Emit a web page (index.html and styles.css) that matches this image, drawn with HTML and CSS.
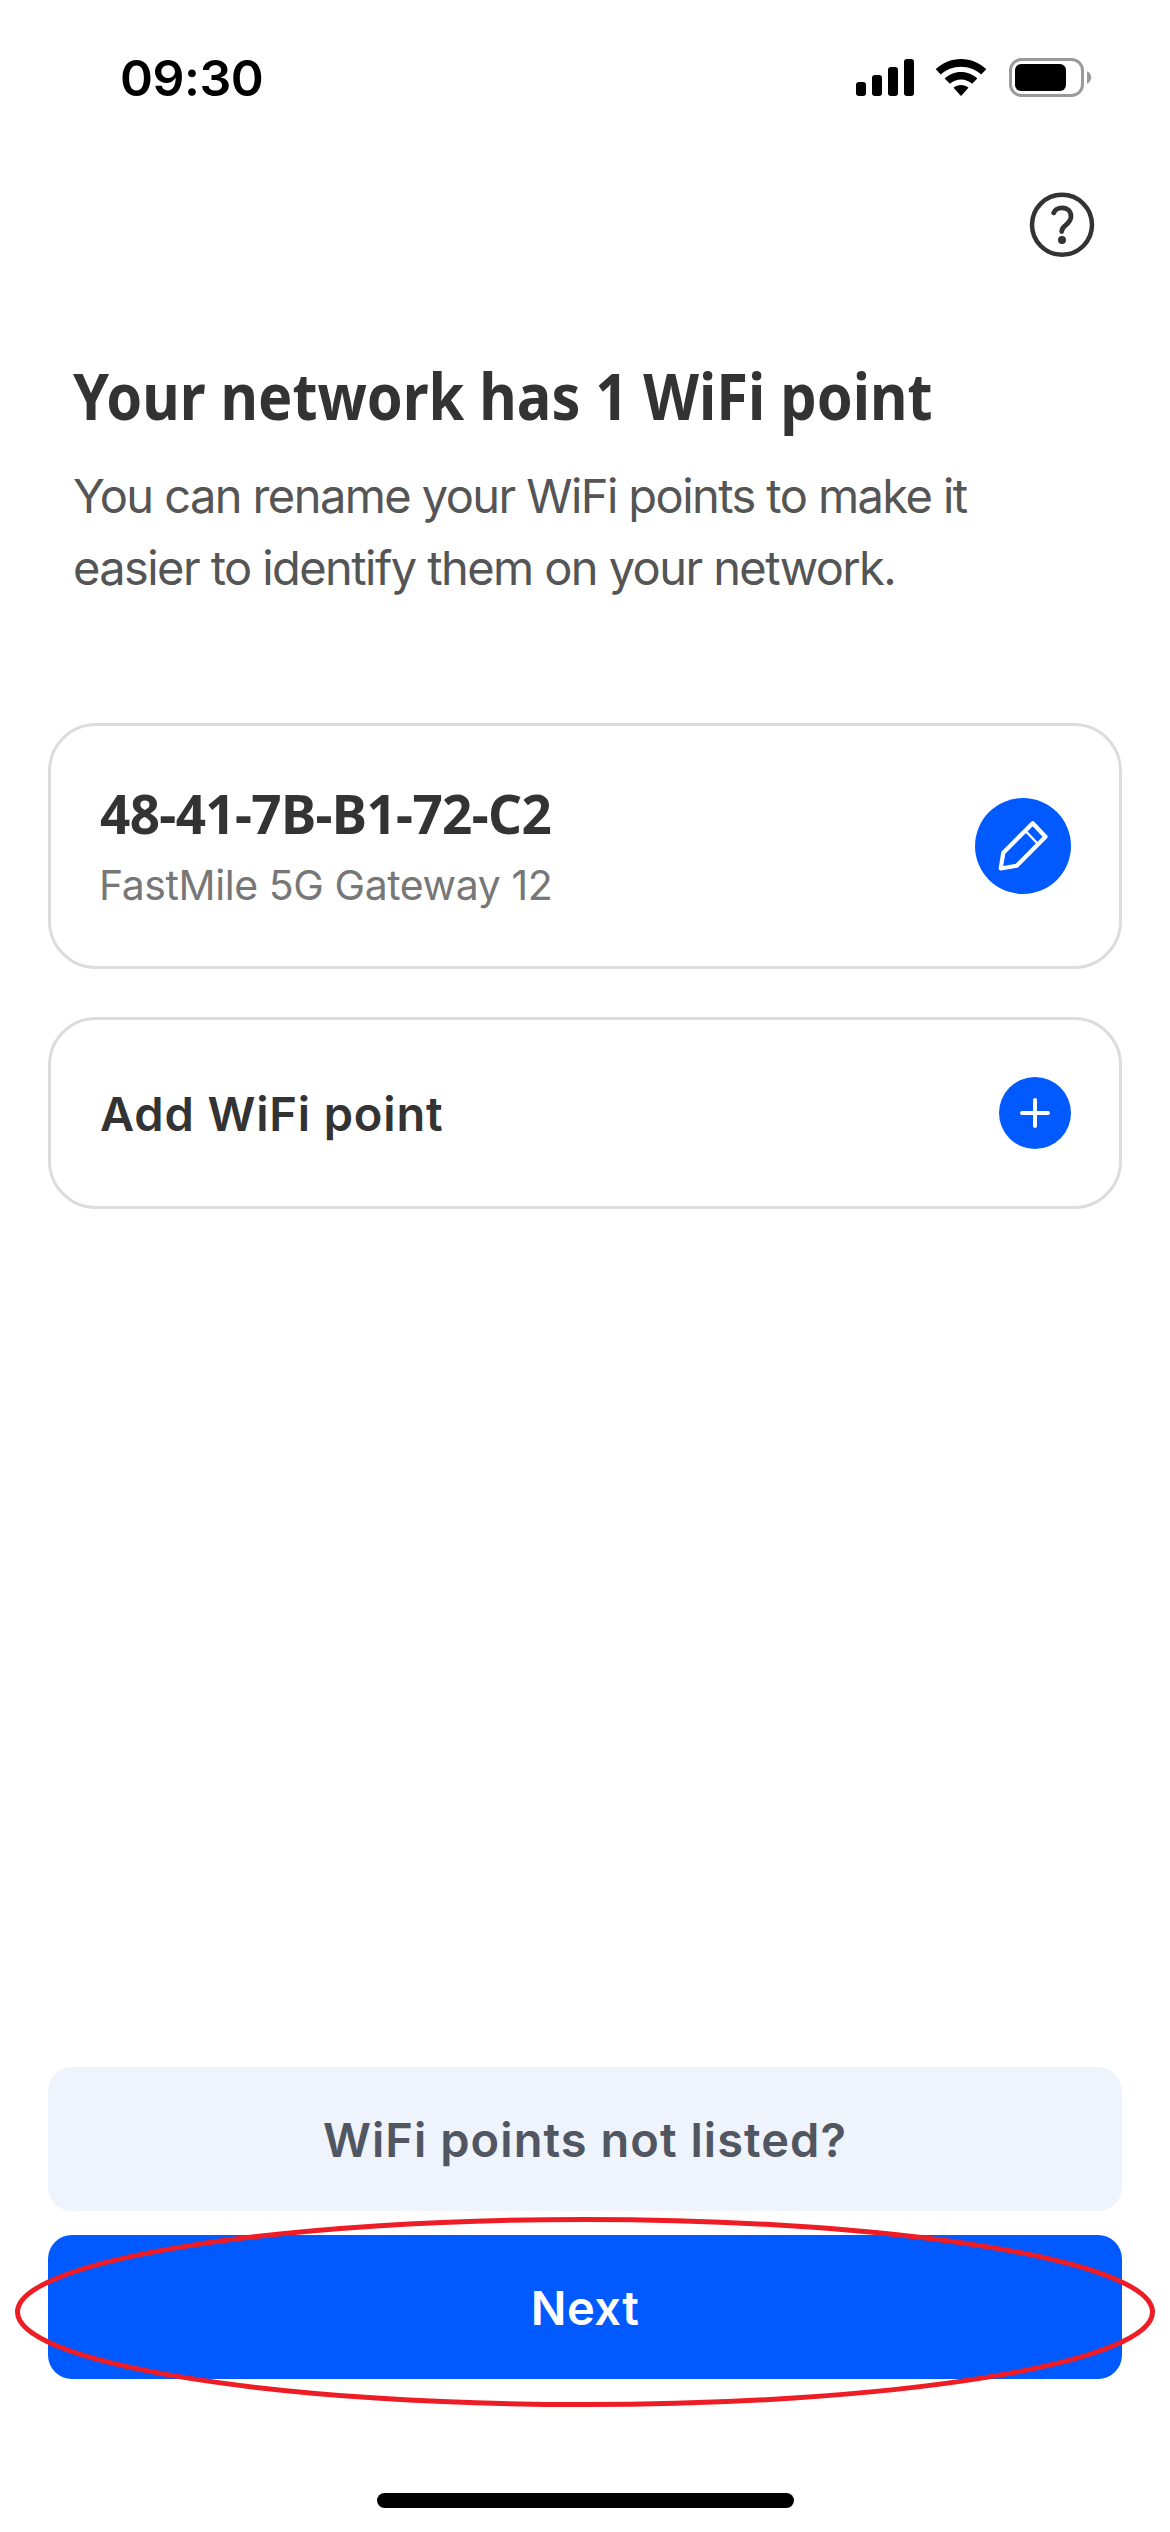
FILE: index.html
```html
<!DOCTYPE html>
<html lang="en">
<head>
<meta charset="utf-8">
<title>WiFi points</title>
<link rel="stylesheet" href="styles.css">
</head>
<body>
<header class="status-bar">
  <span class="clock">09:30</span>
  <div class="status-icons">
    <svg class="signal" width="58" height="38" viewBox="0 0 58 38">
      <rect x="0" y="23" width="10" height="14" rx="3"/>
      <rect x="16" y="16" width="10" height="21" rx="3"/>
      <rect x="32" y="8" width="10" height="29" rx="3"/>
      <rect x="48" y="0" width="10" height="37" rx="3"/>
    </svg>
    <svg class="wifi" width="52" height="38" viewBox="0 0 52 38">
      <path d="M26 0C35.800 0 44.700 3.900 51.300 10.200L46.200 15.500C40.900 10.600 33.800 7.700 26 7.700S11.100 10.600 5.800 15.500L.7 10.200C7.300 3.900 16.200 0 26 0Z"/>
      <path d="M26 13C32.300 13 38 15.500 42.300 19.500L37.100 24.800C34.200 22.200 30.300 20.600 26 20.600S17.800 22.200 14.900 24.800L9.700 19.500C14 15.500 19.700 13 26 13Z"/>
      <path d="M26 26C28.800 26 31.400 27 33.500 28.800L26 37L18.500 28.800C20.600 27 23.200 26 26 26Z"/>
    </svg>
    <svg class="battery" width="84" height="40" viewBox="0 0 84 40">
      <rect x="1.500" y="1.500" width="72" height="36" rx="11" fill="none" stroke="#9a9a9a" stroke-width="3"/>
      <rect x="6" y="6" width="51" height="27" rx="6"/>
      <path d="M78 13.300C80.500 14.200 82.200 16.600 82.200 19.500S80.500 24.800 78 25.700Z" fill="#9a9a9a"/>
    </svg>
  </div>
</header>

<nav class="toolbar">
  <svg class="help" width="66" height="66" viewBox="0 0 66 66">
    <circle cx="33" cy="32.800" r="30" fill="none" stroke="#333" stroke-width="4.500"/>
    <path d="M24.700 20.800C26 17.500 29.300 15.800 33.200 15.800C38.500 15.800 42 19.500 42 24.300C42 28.800 39.500 31 36.500 33.300C33.500 35.600 32.700 36.800 32.700 39.500" fill="none" stroke="#333" stroke-width="4.800" stroke-linecap="round"/>
    <circle cx="33" cy="48" r="4" fill="#333"/>
  </svg>
</nav>

<main class="content">
  <section class="intro">
    <h1 class="title">Your network has 1 WiFi point</h1>
    <p class="lead">You can rename your WiFi points to make it<br>easier to identify them on your network.</p>
  </section>
  <section class="cards">
    <div class="card card-point">
      <div class="point">
        <span class="point-name">48-41-7B-B1-72-C2</span>
        <span class="point-model">FastMile 5G Gateway 12</span>
      </div>
      <svg width="96" height="96" viewBox="0 0 96 96">
        <circle cx="48" cy="48" r="48" fill="#005aff"/>
        <path d="M57.700 25.300L70.500 38.700L41.700 67.700L25.700 70.500L28.300 54.700Z" fill="none" stroke="#fff" stroke-width="4.200" stroke-linejoin="round"/>
        <path d="M50.500 33L63 46" stroke="#fff" stroke-width="2.400"/>
      </svg>
    </div>
    <div class="card card-add">
      <span class="add-label">Add WiFi point</span>
      <svg width="72" height="72" viewBox="0 0 72 72">
        <circle cx="36" cy="36" r="36" fill="#005aff"/>
        <path d="M36 23V49M23 36H49" stroke="#fff" stroke-width="4" stroke-linecap="round"/>
      </svg>
    </div>
  </section>
</main>

<footer class="actions">
  <button class="button button-secondary">WiFi points not listed?</button>
  <div class="highlighted">
    <button class="button button-primary">Next</button>
    <svg class="ring" width="1142" height="192" viewBox="0 0 1142 192">
      <ellipse cx="571" cy="96" rx="567.500" ry="92.500" fill="none" stroke="#ee1c24" stroke-width="5"/>
    </svg>
  </div>
  <div class="home-bar"></div>
</footer>
</body>
</html>
```
FILE: styles.css
```css
* { box-sizing: border-box; }

body {
  margin: 0;
  width: 1170px;
  height: 2532px;
  display: flex;
  flex-direction: column;
  background: #fff;
  color: #333;
  font-family: Inter, "Liberation Sans", sans-serif;
}

.status-bar {
  display: flex;
  justify-content: space-between;
  height: 192px;
  padding: 48px 77px 0 120px;
}

.clock {
  color: #000;
  font-size: 50px;
  font-weight: 600;
  line-height: 60px;
  letter-spacing: -0.5px;
}

.status-icons {
  display: flex;
  align-items: flex-start;
  padding-top: 10px;
}

.signal { margin: 1px 21px 0 0; }
.wifi { margin: 1px 22px 0 0; }

.toolbar {
  display: flex;
  justify-content: flex-end;
  height: 162px;
  padding-right: 75px;
}

.content { flex: 1; }

.intro { padding-left: 73px; }

.title {
  margin: 0 0 22px;
  font-family: "Noto Sans", sans-serif;
  font-size: 64px;
  font-weight: 700;
  line-height: 84px;
  white-space: nowrap;
  transform: scaleX(0.901);
  transform-origin: left;
}

.lead {
  margin: 0;
  color: #555;
  font-size: 47px;
  line-height: 72px;
  letter-spacing: -1.58px;
  white-space: nowrap;
}

.cards {
  display: flex;
  flex-direction: column;
  gap: 48px;
  padding: 119px 48px 0;
}

.card {
  display: flex;
  align-items: center;
  justify-content: space-between;
  padding: 0 48px 0 49px;
  border: 3px solid #dcdcdc;
  border-radius: 48px;
}

.card-point { height: 246px; }
.card-add { height: 192px; }

.point {
  display: flex;
  flex-direction: column;
  gap: 4px;
}

.point-name {
  font-family: "Noto Sans", sans-serif;
  font-size: 53px;
  font-weight: 700;
  line-height: 74px;
  letter-spacing: -0.65px;
}

.point-model {
  color: #777;
  font-size: 41px;
  line-height: 60px;
  letter-spacing: -0.43px;
  margin-left: -1px;
}

.add-label {
  font-size: 47px;
  font-weight: 600;
  letter-spacing: 0.85px;
}

.actions {
  display: flex;
  flex-direction: column;
  gap: 24px;
  height: 465px;
  padding: 0 48px;
}

.button {
  display: block;
  width: 100%;
  height: 144px;
  padding: 0;
  border: 0;
  border-radius: 24px;
  font-family: inherit;
  font-size: 47px;
  font-weight: 600;
  letter-spacing: 1.05px;
}

.button-secondary {
  background: #eef3fc;
  color: #515661;
}

.button-primary {
  background: #005aff;
  color: #fff;
  letter-spacing: 0.5px;
}

.highlighted { position: relative; }

.ring {
  position: absolute;
  left: -34px;
  top: -19px;
}

.home-bar {
  width: 417px;
  height: 15px;
  margin: 90px auto 0;
  border-radius: 8px;
  background: #000;
}
```
